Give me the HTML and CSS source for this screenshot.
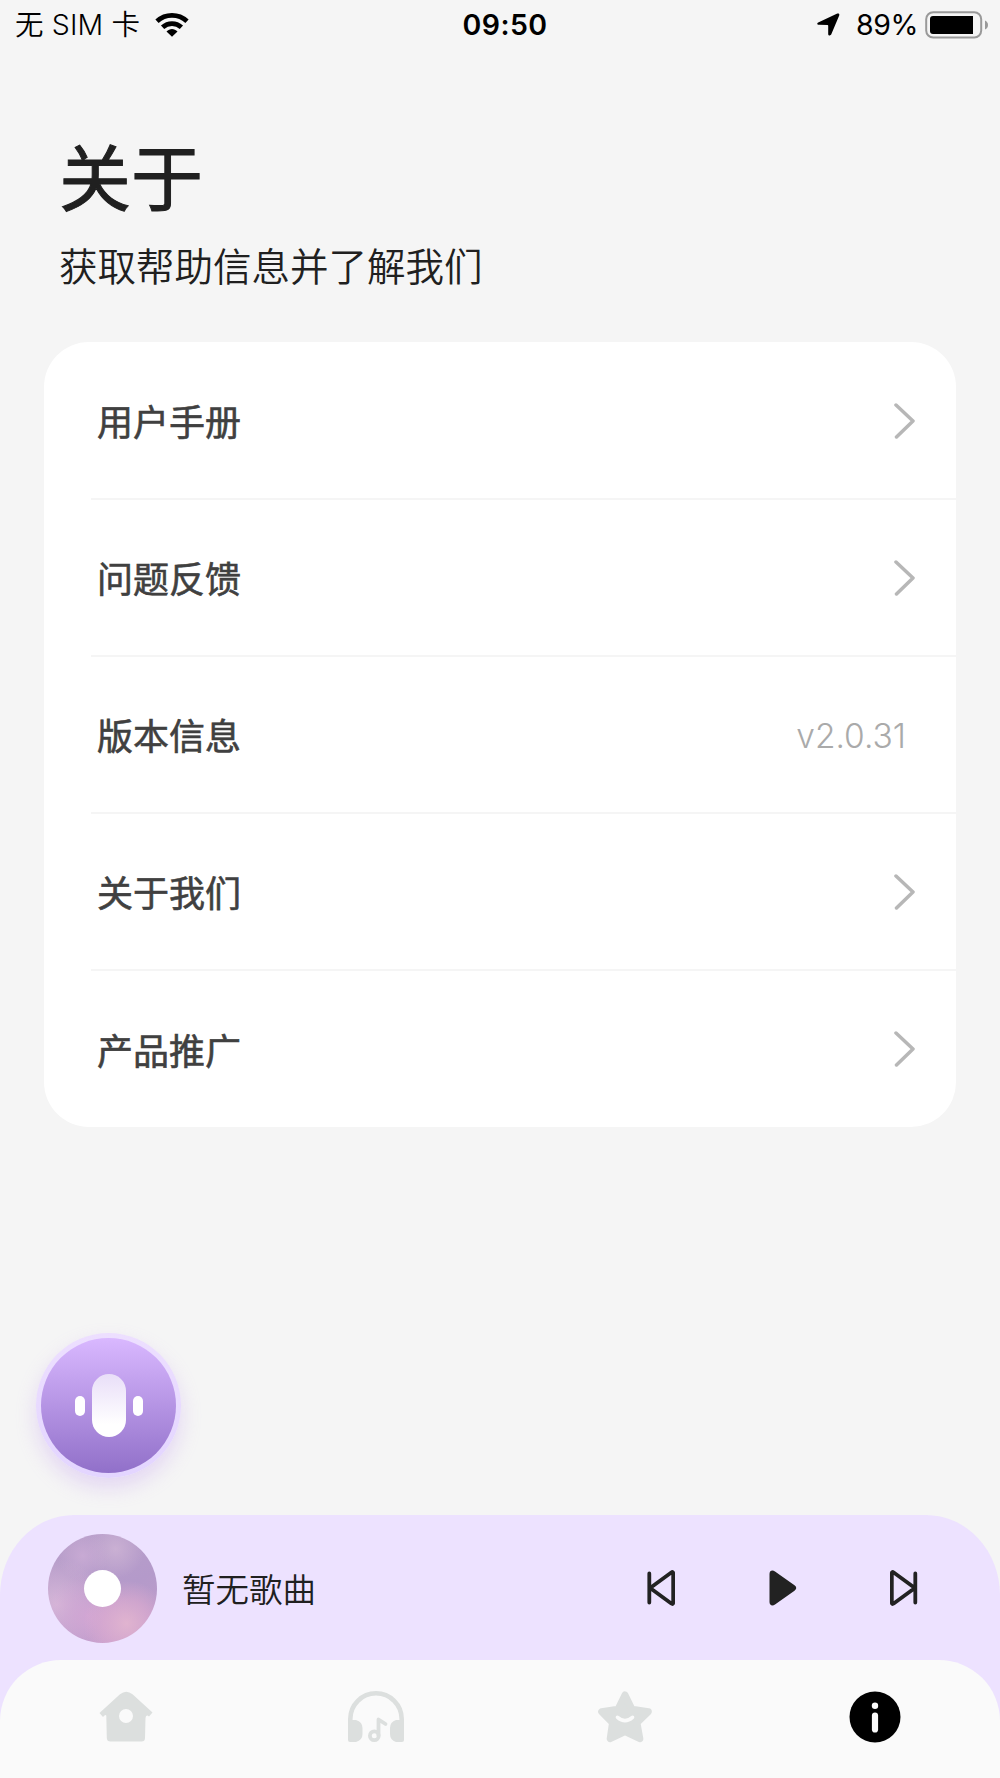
FILE: index.html
```html
<!DOCTYPE html>
<html lang="zh-CN">
<head>
<meta charset="utf-8">
<title>关于</title>
<link rel="stylesheet" href="styles.css">
</head>
<body>
<div class="screen">
  <header class="status">
    <div class="status-left">
      <span class="carrier">无 SIM 卡</span>
      <svg class="wifi" width="34" height="25" viewBox="0 0 34 25"><path d="M2 9.2C10.5 1.4 23.5 1.4 32 9.2" fill="none" stroke="#000" stroke-width="4.8"/><path d="M7.600 15.300C13 10.300 21 10.300 26.400 15.300" fill="none" stroke="#000" stroke-width="4.800"/><path d="M11.500 19.600C14.800 16.200 19.200 16.200 22.500 19.600L17 24.800Z"/></svg>
    </div>
    <div class="clock">09:50</div>
    <div class="status-right">
      <svg class="locate" width="23" height="23" viewBox="0 0 23 23"><path d="M1.2 9.400 20.300.6C21.800.1 22.700 1.100 22.200 2.500L14.300 21.300C13.600 23 11.200 22.700 11.200 20.900V12.700Q11.200 12 10.500 12L2 11.800C0 11.700-.300 10.200 1.200 9.400Z"/></svg>
      <span class="percent">89%</span>
      <svg class="battery" width="64" height="28" viewBox="0 0 64 28"><rect x="1.200" y="1.200" width="55" height="25.400" rx="7" fill="none" stroke="#999" stroke-width="2"/><path d="M8 5H48V23H8Q5 23 5 20V8Q5 5 8 5Z"/><path d="M60 9.500Q63 11 63 14T60 18.500Z" fill="#999"/></svg>
    </div>
  </header>

  <main class="content">
    <h1 class="title">关于</h1>
    <p class="subtitle">获取帮助信息并了解我们</p>
    <ul class="card">
      <li class="row"><span class="label">用户手册</span><svg class="chevron" viewBox="0 0 22 36"><path d="M2 2 19 18 2.500 34"/></svg></li>
      <li class="row"><span class="label">问题反馈</span><svg class="chevron" viewBox="0 0 22 36"><path d="M2 2 19 18 2.500 34"/></svg></li>
      <li class="row"><span class="label">版本信息</span><span class="version">v2.0.31</span></li>
      <li class="row"><span class="label">关于我们</span><svg class="chevron" viewBox="0 0 22 36"><path d="M2 2 19 18 2.500 34"/></svg></li>
      <li class="row"><span class="label">产品推广</span><svg class="chevron" viewBox="0 0 22 36"><path d="M2 2 19 18 2.500 34"/></svg></li>
    </ul>
    <button class="voice" aria-label="语音"><i class="wave"></i><i class="capsule"></i><i class="wave"></i></button>
  </main>

  <footer class="dock">
    <div class="player">
      <div class="disc"><i class="hole"></i></div>
      <span class="song">暂无歌曲</span>
      <div class="controls">
        <svg width="28" height="36" viewBox="0 0 28 36"><path d="M2.300 3.500V32.500M24.300 2.500Q26.200 1.200 26.200 3.500V32.500Q26.200 34.800 24.300 33.500L4.500 19Q3.300 18 4.500 17Z" class="outline"/></svg>
        <svg width="28" height="36" viewBox="0 0 28 36"><path d="M.500 4C.500.600 3.500-.300 6 1.600L25.500 15.300Q29 18 25.500 20.700L6 34.400C3.500 36.300.500 35.400.500 32Z" fill="#222"/></svg>
        <svg width="28" height="36" viewBox="0 0 28 36"><path d="M25.300 3.500V32.500M3.700 2.500Q1.800 1.200 1.800 3.500V32.500Q1.800 34.800 3.700 33.500L23.500 19Q24.700 18 23.500 17Z" class="outline"/></svg>
      </div>
    </div>
    <nav class="tabs">
      <svg width="54" height="52" viewBox="0 0 54 52"><path fill="#dcdfde" fill-rule="evenodd" d="M21 3.200Q27.300-1.800 33.500 3.200L53.500 21.500 50 25.500 48.500 24.500Q46.800 24 46.500 27L46 47Q46 50.500 42.500 50.500H11.500Q8 50.500 7.800 47L7.300 25Q7.200 23.500 5.500 24.500L4 26 .500 22ZM27 18a7 7 0 1 0 0 14 7 7 0 0 0 0-14Z"/></svg>
      <svg width="56" height="52" viewBox="0 0 56 52"><g fill="none" stroke="#dcdfde"><path stroke-width="4.600" d="M2.300 32V28A25.700 25.700 0 0 1 53.700 28V32"/><circle cx="26.300" cy="44.700" r="4.400" stroke-width="3.800"/><path stroke-width="3.800" stroke-linecap="round" stroke-linejoin="round" d="M30.500 44.500V28.500L37.500 33"/></g><path fill="#dcdfde" d="M0 29H8Q14.500 31 14.500 37V43Q14.500 49 8 51H2Q0 51 0 49ZM56 29H48Q42 31 42 37V43Q42 49 48 51H54Q56 51 56 49Z"/></svg>
      <svg width="54" height="52" viewBox="0 0 54 52"><path fill="#dcdfde" stroke="#dcdfde" stroke-width="7" stroke-linejoin="round" d="M27 4 34 18.300 50.300 20.800 39 31.800 41.800 47.700 27 40.500 12.200 47.700 14.500 31.800 3.700 20.800 20 18.300Z"/><path d="M19.500 26.300Q27 32.800 34.500 26.300" fill="none" stroke="#fafafa" stroke-width="3.600" stroke-linecap="round"/></svg>
      <svg width="52" height="52" viewBox="0 0 52 52"><circle cx="26" cy="26" r="25.500"/><circle cx="26" cy="14.800" r="3.200" fill="#fafafa"/><rect x="22.900" y="21.500" width="6.200" height="20" rx="3.100" fill="#fafafa"/></svg>
    </nav>
  </footer>
</div>
</body>
</html>
```
FILE: styles.css
```css
* { box-sizing: border-box; }

body {
  margin: 0;
  background: #f5f5f5;
  color: #202020;
  font-family: Inter, "Noto Sans CJK SC", sans-serif;
}

.screen {
  display: flex;
  flex-direction: column;
  width: 1000px;
  height: 1778px;
  overflow: hidden;
}

.status {
  display: grid;
  grid-template-columns: 1fr auto 1fr;
  align-items: center;
  height: 49px;
  padding: 0 11px 0 15px;
  color: #000;
  font-size: 28.500px;
  line-height: 48px;
  white-space: nowrap;
}
.status-left, .status-right { display: flex; align-items: center; }
.status-right { justify-content: flex-end; }
.carrier { padding-top: 1px; font-weight: 350; letter-spacing: 0.15px; }
.wifi { margin-left: 15px; }
.clock { padding: 1px 0 0 6px; font-weight: 600; letter-spacing: 0.4px; }
.locate { margin-right: 16px; }
.percent { padding-top: 1px; margin-right: 7px; letter-spacing: -0.4px; }

.content {
  display: flex;
  flex-direction: column;
  flex: 1;
  padding: 78px 44px 0;
}

.title {
  margin: 0;
  padding-left: 15px;
  font-size: 72px;
  font-weight: 400;
  line-height: 104px;
  -webkit-text-stroke: 1px currentColor;
}
.subtitle {
  margin: 8px 0 0;
  padding-left: 15px;
  font-size: 38.500px;
  font-weight: 350;
  line-height: 56px;
}

.card {
  margin: 47px 0 0;
  padding: 1px 0 0;
  border-radius: 45px;
  background: #fff;
  list-style: none;
}
.row {
  display: flex;
  align-items: center;
  justify-content: space-between;
  height: 157px;
  margin-left: 47px;
  padding: 0 40px 0 6px;
  border-bottom: 2px solid #f5f5f5;
  color: #404040;
  font-size: 36px;
}
.row:last-child { height: 156px; border-bottom: 0; }
.label {
  margin-top: -1px;
  -webkit-text-stroke: 0.6px currentColor;
}
.version {
  margin: 2px 10px 0 0;
  color: #aaa;
  font-size: 33.500px;
  font-weight: 350;
}
.chevron {
  width: 22px;
  height: 36px;
  fill: none;
  stroke: #b7b7b7;
  stroke-width: 3.500px;
  stroke-linecap: round;
  stroke-linejoin: round;
}

.voice {
  display: flex;
  align-items: center;
  justify-content: center;
  gap: 7px;
  width: 145px;
  height: 145px;
  margin: 206px 0 0 -8px;
  padding: 0;
  border: 5px solid transparent;
  border-radius: 50%;
  background:
    linear-gradient(#d9b8ff, #9170c9) padding-box,
    linear-gradient(#eddfff, #e3d5ff) border-box;
  box-shadow: 0 10px 20px rgba(188, 145, 240, 0.3);
}
.wave { width: 10px; height: 20px; border-radius: 5px; background: #fff; }
.capsule {
  width: 34px;
  height: 63px;
  border-radius: 17px;
  background: linear-gradient(#e9def8, #fff 80%);
}

.dock {
  height: 263px;
  border-radius: 74px 74px 0 0 / 80px 80px 0 0;
  background: #ede2ff;
}
.player {
  display: flex;
  align-items: center;
  height: 145px;
  padding: 1px 82px 0 48px;
}
.disc {
  display: grid;
  place-items: center;
  width: 109px;
  height: 109px;
  border-radius: 50%;
  background:
    radial-gradient(circle at 72% 82%, rgba(228, 182, 208, 0.9), rgba(222, 172, 208, 0.6) 20%, transparent 36%),
    radial-gradient(circle at 37% 75%, rgba(211, 166, 212, 0.9), transparent 40%),
    radial-gradient(circle at 8% 65%, rgba(218, 186, 218, 0.9), transparent 38%),
    radial-gradient(circle at 32% 20%, rgba(204, 173, 214, 0.8), transparent 22%),
    radial-gradient(circle at 62% 14%, rgba(204, 178, 212, 0.9), transparent 25%),
    linear-gradient(155deg, #b9a0ca, #b49aca 55%, #c39dcb);
}
.hole { width: 37px; height: 37px; border-radius: 50%; background: #fff; }
.song { margin: -2px 0 0 25px; font-size: 33.500px; font-weight: 350; }
.controls { display: flex; gap: 93.500px; margin-left: auto; }
.outline {
  fill: none;
  stroke: #222;
  stroke-width: 3.800px;
  stroke-linecap: round;
  stroke-linejoin: round;
}

.tabs {
  display: grid;
  grid-template-columns: repeat(4, 1fr);
  justify-items: center;
  height: 118px;
  padding: 31px 0 0 1px;
  border-radius: 61px 61px 0 0;
  background: #fafafa;
}
```
